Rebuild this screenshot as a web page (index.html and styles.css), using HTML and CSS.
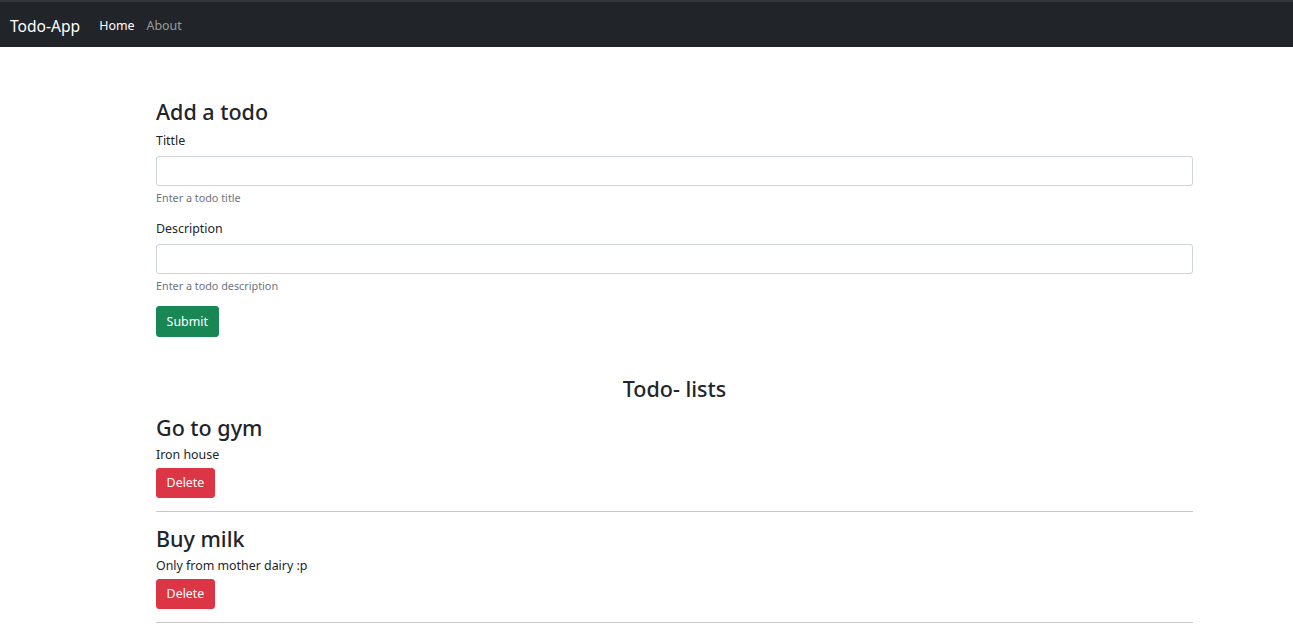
FILE: index.html
```html
<!DOCTYPE html>
<html lang="en">
<head>
<meta charset="utf-8">
<title>Todo-App</title>
<link rel="stylesheet" href="styles.css">
</head>
<body>
<nav class="navbar">
  <a class="brand" href="#">Todo-App</a>
  <ul class="nav">
    <li><a class="nav-link active" href="#">Home</a></li>
    <li><a class="nav-link" href="#">About</a></li>
  </ul>
</nav>
<main class="container">
  <h3 class="heading">Add a todo</h3>
  <form class="form">
    <div class="field">
      <label class="label" for="title">Tittle</label>
      <input class="input" id="title" type="text">
      <div class="help">Enter a todo title</div>
    </div>
    <div class="field">
      <label class="label" for="desc">Description</label>
      <input class="input" id="desc" type="text">
      <div class="help">Enter a todo description</div>
    </div>
    <button class="btn btn-success" type="button">Submit</button>
  </form>
  <h3 class="heading list-title">Todo- lists</h3>
  <div class="todo">
    <h3 class="heading">Go to gym</h3>
    <p class="desc">Iron house</p>
    <button class="btn btn-danger" type="button">Delete</button>
    <hr class="divider">
  </div>
  <div class="todo">
    <h3 class="heading">Buy milk</h3>
    <p class="desc">Only from mother dairy :p</p>
    <button class="btn btn-danger" type="button">Delete</button>
    <hr class="divider">
  </div>
</main>
</body>
</html>
```
FILE: styles.css
```css
* { box-sizing: border-box; }
html, body { margin: 0; padding: 0; }
body {
  font-family: "Noto Sans", "Open Sans", "Liberation Sans", sans-serif;
  font-size: 12.4px;
  line-height: 1.5;
  color: #212529;
  background: #fff;
}
a { text-decoration: none; }

.navbar {
  height: 47px;
  background: #212529;
  border-top: 2px solid #33363a;
  display: flex;
  align-items: center;
  padding: 4px 10px 0;
}
.brand {
  color: #fff;
  font-size: 15.6px;
  margin-right: 19px;
  line-height: 1;
}
.nav {
  list-style: none;
  margin: 0;
  padding: 0;
  display: flex;
  gap: 12px;
}
.nav-link {
  color: rgba(255,255,255,0.55);
  font-size: 12.4px;
}
.nav-link.active { color: #fff; }

.container {
  width: 1037px;
  margin-left: 156px;
  padding-top: 51px;
}
.heading {
  font-size: 21.5px;
  font-weight: 500;
  line-height: 27px;
  margin: 0;
}
.form { margin-top: 5px; }
.field { margin-bottom: 11.8px; display: flex; flex-direction: column; }
.label {
  display: block;
  line-height: 19px;
  margin-top: 1px;
  margin-bottom: 6px;
}
.input {
  height: 30px;
  width: 100%;
  border: 1px solid #ced4da;
  border-radius: 3px;
  padding: 0 9px;
  font: inherit;
}
.help {
  margin-top: 4px;
  font-size: 10.8px;
  line-height: 16px;
  color: #6c757d;
}
.btn {
  font: inherit;
  font-size: 12.4px;
  color: #fff;
  border: 1px solid transparent;
  border-radius: 3px;
  padding: 0 9.6px;
  height: 31px;
  line-height: 29px;
  display: block;
}
.btn-success { background: #198754; border-color: #198754; }
.btn-danger { background: #dc3545; border-color: #dc3545; height: 30px; line-height: 28px; }

.list-title {
  text-align: center;
  margin-top: 38px;
  margin-bottom: 12px;
}
.desc {
  margin: 4px 0 4px;
  line-height: 19px;
}
.divider {
  border: 0;
  border-top: 1px solid #c9c9c9;
  margin: 13px 0 13.5px;
}
```
